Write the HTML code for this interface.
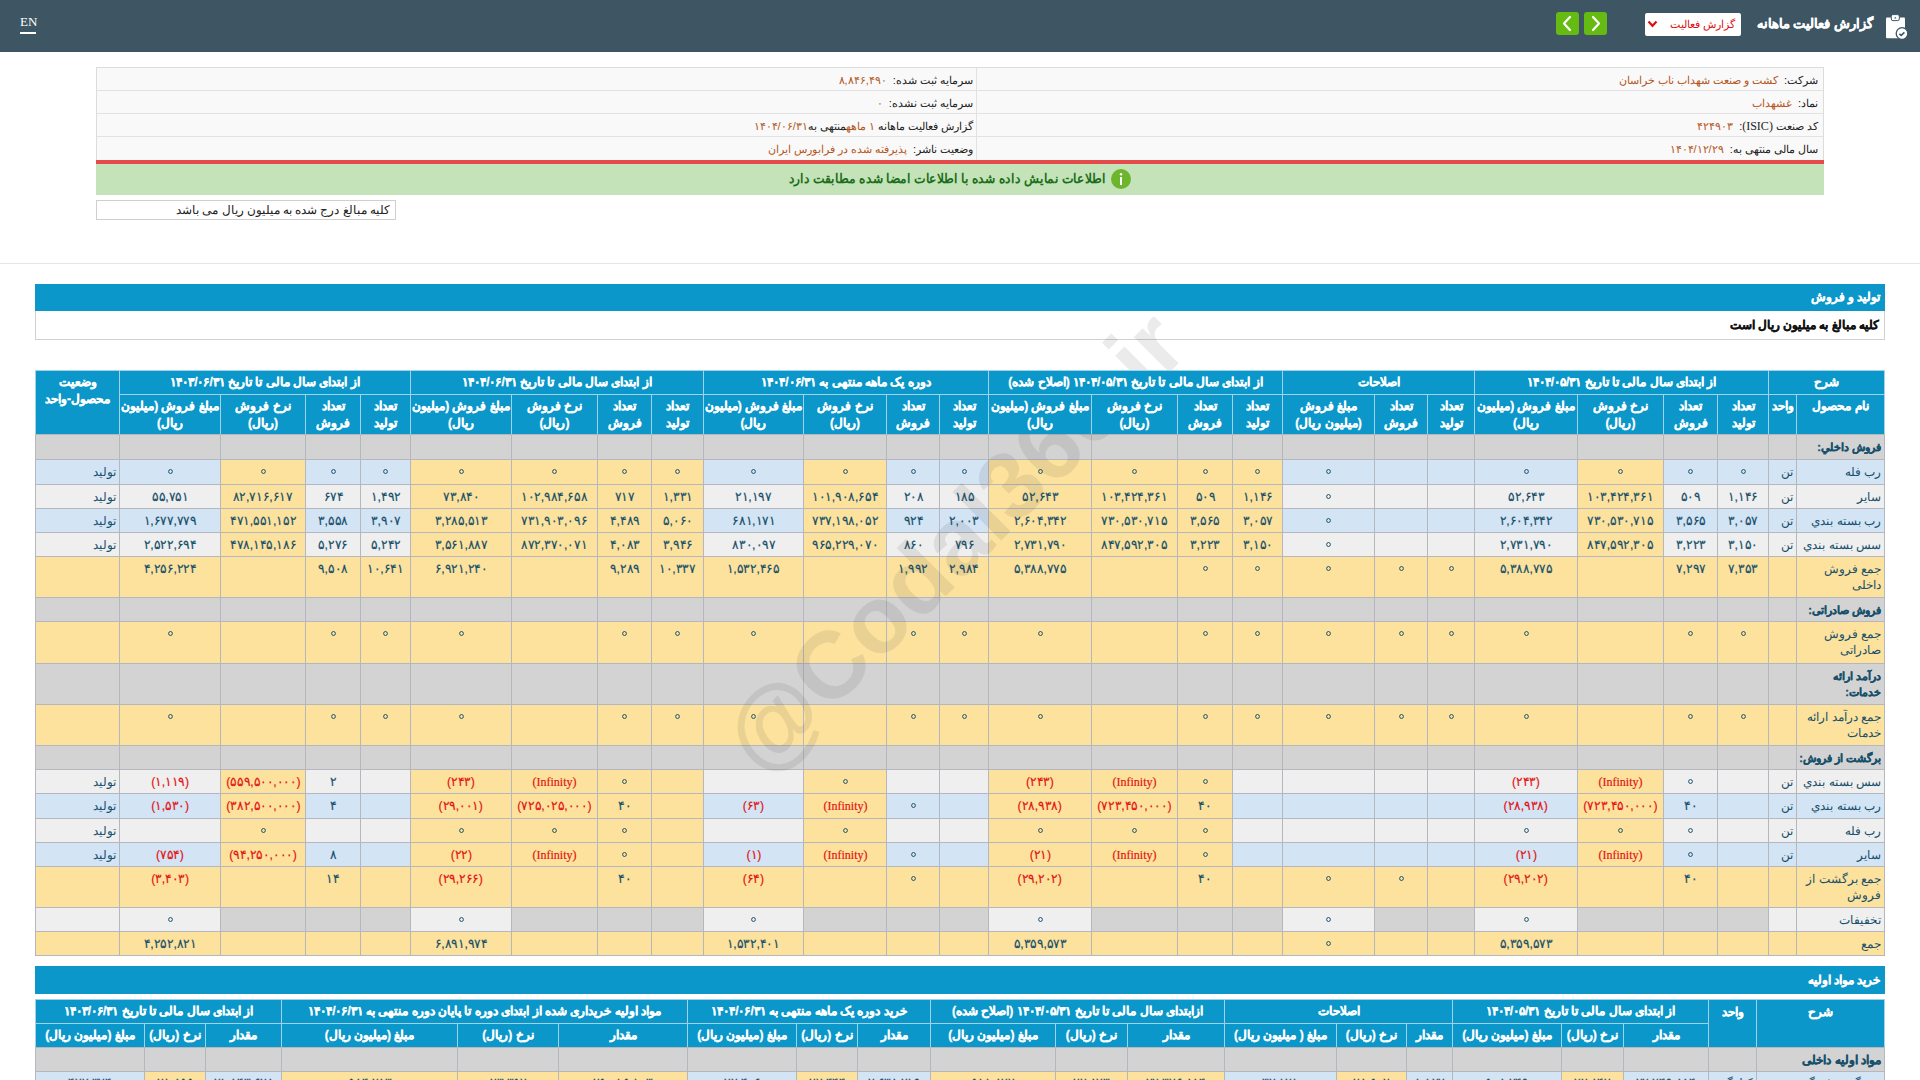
<!DOCTYPE html>
<html lang="fa"><head><meta charset="utf-8"><title>گزارش فعالیت ماهانه</title><style>
*{box-sizing:border-box;margin:0;padding:0}
html,body{width:1920px;height:1080px;overflow:hidden;background:#fff}
body{font-family:"Liberation Sans",sans-serif;font-size:13px;color:#222;position:relative}
.a{position:absolute}
.c{position:absolute;overflow:hidden;white-space:nowrap;direction:rtl;border-left:1px solid #b6b6be;border-top:1px solid #b6b6be;color:#17506b;text-align:center;font-size:13px;line-height:16px;padding-top:4px}
.h{position:absolute;overflow:hidden;white-space:nowrap;direction:rtl;border-left:1px solid #9fd3ea;border-top:1px solid #9fd3ea;background:#0b97c9;color:#fff;text-align:center;font-weight:bold;-webkit-text-stroke:.3px #fff;font-size:12px;line-height:17px;padding-top:3px}
.r{text-align:right;padding-right:3px}
.n{color:#e31414}
.b{font-weight:bold;-webkit-text-stroke:.3px currentColor}
.t1{font-size:11.5px}
.sb{font-weight:bold;font-size:12px;-webkit-text-stroke:.3px currentColor}
.sb11{font-size:11px}
.wrap{white-space:nowrap}
.inf{font-family:"Liberation Serif",serif;font-size:12.8px}
.s{display:inline-block;transform:scaleX(.94);-webkit-text-stroke:.2px currentColor}
.z{display:inline-block;width:5px;height:5px;border:1.7px solid currentColor;border-radius:50%;vertical-align:top;margin-top:5px}
.t1{font-size:12px}
</style></head><body>
<div class="a" style="left:0;top:0;width:1920px;height:52px;background:#3e5664"></div>
<div class="a" style="left:20px;top:14px;font-family:'Liberation Serif',serif;font-size:13px;color:#fff;line-height:16px">EN</div>
<div class="a" style="left:20px;top:32px;width:16px;height:1.5px;background:#fff"></div>
<svg class="a" style="left:1882px;top:12px" width="30" height="30" viewBox="0 0 30 30">
<rect x="4" y="5.6" width="19" height="20.7" rx="1" fill="#fff"/>
<rect x="9.3" y="2.6" width="8" height="6" rx="1.6" fill="#fff" stroke="#3e5664" stroke-width="1"/>
<path d="M12.2 6.6 l1.1 -1.8 l1.1 1.8z" fill="#3e5664"/>
<circle cx="20" cy="21.5" r="5.8" fill="#fff" stroke="#3e5664" stroke-width="1.3"/>
<path d="M17.4 21.9 l1.8 1.5 l3.2 -3" stroke="#3e5664" stroke-width="1.6" fill="none"/>
</svg>
<div class="a b" dir="rtl" style="right:47px;top:14px;font-size:13px;line-height:20px;color:#fff">گزارش فعالیت ماهانه</div>
<div class="a" style="left:1645px;top:13px;width:96px;height:23px;background:#fff;border-radius:2px"></div>
<div class="a" dir="rtl" style="right:185px;top:15px;font-size:11px;line-height:19px;color:#e01010">گزارش فعالیت</div>
<svg class="a" style="left:1647px;top:20px" width="11" height="8" viewBox="0 0 11 8"><path d="M1.5 1.5 L5.5 5.8 L9.5 1.5" stroke="#e01010" stroke-width="2.2" fill="none"/></svg>
<div class="a" style="left:1556px;top:12px;width:23px;height:23px;background:#66bb12;border-radius:3px"></div>
<svg class="a" style="left:1556px;top:12px" width="23" height="23" viewBox="0 0 23 23"><path d="M14 5 L8 11.5 L14 18" stroke="#fff" stroke-width="2.2" fill="none" stroke-linecap="round" stroke-linejoin="round"/></svg>
<div class="a" style="left:1584px;top:12px;width:23px;height:23px;background:#66bb12;border-radius:3px"></div>
<svg class="a" style="left:1584px;top:12px" width="23" height="23" viewBox="0 0 23 23"><path d="M9 5 L15 11.5 L9 18" stroke="#fff" stroke-width="2.2" fill="none" stroke-linecap="round" stroke-linejoin="round"/></svg>
<div class="a" style="left:96px;top:67px;width:1728px;height:95px;background:#f9f9f9;border:1px solid #dcdcdc;border-bottom:none"></div>
<div class="a" style="left:97px;top:90px;width:1726px;height:1px;background:#e2e2e2"></div>
<div class="a" style="left:97px;top:113px;width:1726px;height:1px;background:#e2e2e2"></div>
<div class="a" style="left:97px;top:136px;width:1726px;height:1px;background:#e2e2e2"></div>
<div class="a" style="left:976px;top:68px;width:1px;height:93px;background:#e2e2e2"></div>
<div class="a" dir="rtl" style="right:102px;top:69px;line-height:23px;font-size:11px;white-space:nowrap"><span style="color:#222">شرکت:</span>&nbsp; <span style="color:#b4561c">کشت و صنعت شهداب ناب خراسان</span></div>
<div class="a" dir="rtl" style="right:947px;top:69px;line-height:23px;font-size:11px;white-space:nowrap"><span style="color:#222">سرمایه ثبت شده:</span>&nbsp; <span style="color:#b4561c">۸,۸۴۶,۴۹۰</span></div>
<div class="a" dir="rtl" style="right:102px;top:92px;line-height:23px;font-size:11px;white-space:nowrap"><span style="color:#222">نماد:</span>&nbsp; <span style="color:#b4561c">غشهداب</span></div>
<div class="a" dir="rtl" style="right:947px;top:92px;line-height:23px;font-size:11px;white-space:nowrap"><span style="color:#222">سرمایه ثبت نشده:</span>&nbsp; <span style="color:#b4561c">۰</span></div>
<div class="a" dir="rtl" style="right:102px;top:115px;line-height:23px;font-size:11px;white-space:nowrap"><span style="color:#222">کد صنعت <span style="font-family:'Liberation Serif',serif;font-size:12px">(ISIC)</span>:</span>&nbsp; <span style="color:#b4561c">۴۲۴۹۰۳</span></div>
<div class="a" dir="rtl" style="right:947px;top:115px;line-height:23px;font-size:11px;white-space:nowrap"><span style="color:#222">گزارش فعالیت ماهانه </span><span style="color:#b4561c">۱ ماهه</span><span style="color:#222">منتهی به</span><span style="color:#b4561c">۱۴۰۴/۰۶/۳۱</span></div>
<div class="a" dir="rtl" style="right:102px;top:138px;line-height:23px;font-size:11px;white-space:nowrap"><span style="color:#222">سال مالی منتهی به:</span>&nbsp; <span style="color:#b4561c">۱۴۰۴/۱۲/۲۹</span></div>
<div class="a" dir="rtl" style="right:947px;top:138px;line-height:23px;font-size:11px;white-space:nowrap"><span style="color:#222">وضعیت ناشر:</span>&nbsp; <span style="color:#b4561c">پذیرفته شده در فرابورس ایران</span></div>
<div class="a" style="left:96px;top:160px;width:1728px;height:4px;background:#e44a4a"></div>
<div class="a" style="left:96px;top:164px;width:1728px;height:31px;background:#c4e3b8"></div>
<div class="a" dir="rtl" style="font-weight:bold;right:814px;top:170px;line-height:18px;font-size:13px;color:#1c6e1c;white-space:nowrap;transform:scaleX(.942);transform-origin:100% 50%">اطلاعات نمایش داده شده با اطلاعات امضا شده مطابقت دارد</div>
<svg class="a" style="left:1111px;top:169px" width="20" height="20" viewBox="0 0 20 20"><circle cx="10" cy="10" r="10" fill="#6cb52d"/><rect x="9" y="8" width="2" height="8" fill="#fff"/><circle cx="10" cy="5.3" r="1.2" fill="#fff"/></svg>
<div class="a" style="left:96px;top:200px;width:300px;height:20px;border:1px solid #cfcfcf;background:#fff"></div>
<div class="a" dir="rtl" style="right:1530px;top:201px;line-height:18px;font-size:11.7px;color:#222;white-space:nowrap">کلیه مبالغ درج شده به میلیون ریال می باشد</div>
<div class="a" style="left:0;top:263px;width:1920px;height:1px;background:#e6e6e6"></div>
<div class="a b" dir="rtl" style="left:35px;top:311px;width:1850px;height:29px;background:#fff;border:1px solid #d0d0d0;border-top:none;color:#111;font-size:11.8px;line-height:28px;padding-right:5px">کلیه مبالغ به میلیون ریال است</div>
<div class="c r sb sb11" style="left:1796.00px;top:434.00px;width:88.00px;height:25.00px;background:#d3d3d3;">فروش داخلي:</div>
<div class="c r t1" style="left:1768.00px;top:434.00px;width:28.00px;height:25.00px;background:#d3d3d3;"></div>
<div class="c " style="left:1717.00px;top:434.00px;width:51.00px;height:25.00px;background:#d3d3d3;"></div>
<div class="c " style="left:1663.00px;top:434.00px;width:54.00px;height:25.00px;background:#d3d3d3;"></div>
<div class="c " style="left:1577.00px;top:434.00px;width:86.00px;height:25.00px;background:#d3d3d3;"></div>
<div class="c " style="left:1474.00px;top:434.00px;width:103.00px;height:25.00px;background:#d3d3d3;"></div>
<div class="c " style="left:1427.00px;top:434.00px;width:47.00px;height:25.00px;background:#d3d3d3;"></div>
<div class="c " style="left:1374.00px;top:434.00px;width:53.00px;height:25.00px;background:#d3d3d3;"></div>
<div class="c " style="left:1282.00px;top:434.00px;width:92.00px;height:25.00px;background:#d3d3d3;"></div>
<div class="c " style="left:1232.00px;top:434.00px;width:50.00px;height:25.00px;background:#d3d3d3;"></div>
<div class="c " style="left:1177.00px;top:434.00px;width:55.00px;height:25.00px;background:#d3d3d3;"></div>
<div class="c " style="left:1091.00px;top:434.00px;width:86.00px;height:25.00px;background:#d3d3d3;"></div>
<div class="c " style="left:988.00px;top:434.00px;width:103.00px;height:25.00px;background:#d3d3d3;"></div>
<div class="c " style="left:939.00px;top:434.00px;width:49.00px;height:25.00px;background:#d3d3d3;"></div>
<div class="c " style="left:886.00px;top:434.00px;width:53.00px;height:25.00px;background:#d3d3d3;"></div>
<div class="c " style="left:803.00px;top:434.00px;width:83.00px;height:25.00px;background:#d3d3d3;"></div>
<div class="c " style="left:703.00px;top:434.00px;width:100.00px;height:25.00px;background:#d3d3d3;"></div>
<div class="c " style="left:651.00px;top:434.00px;width:52.00px;height:25.00px;background:#d3d3d3;"></div>
<div class="c " style="left:597.00px;top:434.00px;width:54.00px;height:25.00px;background:#d3d3d3;"></div>
<div class="c " style="left:511.00px;top:434.00px;width:86.00px;height:25.00px;background:#d3d3d3;"></div>
<div class="c " style="left:410.00px;top:434.00px;width:101.00px;height:25.00px;background:#d3d3d3;"></div>
<div class="c " style="left:360.00px;top:434.00px;width:50.00px;height:25.00px;background:#d3d3d3;"></div>
<div class="c " style="left:305.00px;top:434.00px;width:55.00px;height:25.00px;background:#d3d3d3;"></div>
<div class="c " style="left:220.00px;top:434.00px;width:85.00px;height:25.00px;background:#d3d3d3;"></div>
<div class="c " style="left:119.00px;top:434.00px;width:101.00px;height:25.00px;background:#d3d3d3;"></div>
<div class="c r t1" style="left:35.00px;top:434.00px;width:84.00px;height:25.00px;background:#d3d3d3;"></div>
<div class="c r t1" style="left:1796.00px;top:459.00px;width:88.00px;height:25.00px;background:#d3e4f5;">رب فله</div>
<div class="c r t1" style="left:1768.00px;top:459.00px;width:28.00px;height:25.00px;background:#d3e4f5;">تن</div>
<div class="c " style="left:1717.00px;top:459.00px;width:51.00px;height:25.00px;background:#d3e4f5;"><span class="s"><i class="z"></i></span></div>
<div class="c " style="left:1663.00px;top:459.00px;width:54.00px;height:25.00px;background:#d3e4f5;"><span class="s"><i class="z"></i></span></div>
<div class="c " style="left:1577.00px;top:459.00px;width:86.00px;height:25.00px;background:#fde29d;"><span class="s"><i class="z"></i></span></div>
<div class="c " style="left:1474.00px;top:459.00px;width:103.00px;height:25.00px;background:#d3e4f5;"><span class="s"><i class="z"></i></span></div>
<div class="c " style="left:1427.00px;top:459.00px;width:47.00px;height:25.00px;background:#d3e4f5;"></div>
<div class="c " style="left:1374.00px;top:459.00px;width:53.00px;height:25.00px;background:#d3e4f5;"></div>
<div class="c " style="left:1282.00px;top:459.00px;width:92.00px;height:25.00px;background:#d3e4f5;"><span class="s"><i class="z"></i></span></div>
<div class="c " style="left:1232.00px;top:459.00px;width:50.00px;height:25.00px;background:#fde29d;"><span class="s"><i class="z"></i></span></div>
<div class="c " style="left:1177.00px;top:459.00px;width:55.00px;height:25.00px;background:#fde29d;"><span class="s"><i class="z"></i></span></div>
<div class="c " style="left:1091.00px;top:459.00px;width:86.00px;height:25.00px;background:#fde29d;"><span class="s"><i class="z"></i></span></div>
<div class="c " style="left:988.00px;top:459.00px;width:103.00px;height:25.00px;background:#fde29d;"><span class="s"><i class="z"></i></span></div>
<div class="c " style="left:939.00px;top:459.00px;width:49.00px;height:25.00px;background:#d3e4f5;"><span class="s"><i class="z"></i></span></div>
<div class="c " style="left:886.00px;top:459.00px;width:53.00px;height:25.00px;background:#d3e4f5;"><span class="s"><i class="z"></i></span></div>
<div class="c " style="left:803.00px;top:459.00px;width:83.00px;height:25.00px;background:#fde29d;"><span class="s"><i class="z"></i></span></div>
<div class="c " style="left:703.00px;top:459.00px;width:100.00px;height:25.00px;background:#d3e4f5;"><span class="s"><i class="z"></i></span></div>
<div class="c " style="left:651.00px;top:459.00px;width:52.00px;height:25.00px;background:#fde29d;"><span class="s"><i class="z"></i></span></div>
<div class="c " style="left:597.00px;top:459.00px;width:54.00px;height:25.00px;background:#fde29d;"><span class="s"><i class="z"></i></span></div>
<div class="c " style="left:511.00px;top:459.00px;width:86.00px;height:25.00px;background:#fde29d;"><span class="s"><i class="z"></i></span></div>
<div class="c " style="left:410.00px;top:459.00px;width:101.00px;height:25.00px;background:#fde29d;"><span class="s"><i class="z"></i></span></div>
<div class="c " style="left:360.00px;top:459.00px;width:50.00px;height:25.00px;background:#d3e4f5;"><span class="s"><i class="z"></i></span></div>
<div class="c " style="left:305.00px;top:459.00px;width:55.00px;height:25.00px;background:#d3e4f5;"><span class="s"><i class="z"></i></span></div>
<div class="c " style="left:220.00px;top:459.00px;width:85.00px;height:25.00px;background:#fde29d;"><span class="s"><i class="z"></i></span></div>
<div class="c " style="left:119.00px;top:459.00px;width:101.00px;height:25.00px;background:#d3e4f5;"><span class="s"><i class="z"></i></span></div>
<div class="c r t1" style="left:35.00px;top:459.00px;width:84.00px;height:25.00px;background:#d3e4f5;">تولید</div>
<div class="c r t1" style="left:1796.00px;top:484.00px;width:88.00px;height:24.00px;background:#efefef;">سایر</div>
<div class="c r t1" style="left:1768.00px;top:484.00px;width:28.00px;height:24.00px;background:#efefef;">تن</div>
<div class="c " style="left:1717.00px;top:484.00px;width:51.00px;height:24.00px;background:#efefef;"><span class="s">۱,۱۴۶</span></div>
<div class="c " style="left:1663.00px;top:484.00px;width:54.00px;height:24.00px;background:#efefef;"><span class="s">۵۰۹</span></div>
<div class="c " style="left:1577.00px;top:484.00px;width:86.00px;height:24.00px;background:#fde29d;"><span class="s">۱۰۳,۴۲۴,۳۶۱</span></div>
<div class="c " style="left:1474.00px;top:484.00px;width:103.00px;height:24.00px;background:#efefef;"><span class="s">۵۲,۶۴۳</span></div>
<div class="c " style="left:1427.00px;top:484.00px;width:47.00px;height:24.00px;background:#efefef;"></div>
<div class="c " style="left:1374.00px;top:484.00px;width:53.00px;height:24.00px;background:#efefef;"></div>
<div class="c " style="left:1282.00px;top:484.00px;width:92.00px;height:24.00px;background:#efefef;"><span class="s"><i class="z"></i></span></div>
<div class="c " style="left:1232.00px;top:484.00px;width:50.00px;height:24.00px;background:#fde29d;"><span class="s">۱,۱۴۶</span></div>
<div class="c " style="left:1177.00px;top:484.00px;width:55.00px;height:24.00px;background:#fde29d;"><span class="s">۵۰۹</span></div>
<div class="c " style="left:1091.00px;top:484.00px;width:86.00px;height:24.00px;background:#fde29d;"><span class="s">۱۰۳,۴۲۴,۳۶۱</span></div>
<div class="c " style="left:988.00px;top:484.00px;width:103.00px;height:24.00px;background:#fde29d;"><span class="s">۵۲,۶۴۳</span></div>
<div class="c " style="left:939.00px;top:484.00px;width:49.00px;height:24.00px;background:#efefef;"><span class="s">۱۸۵</span></div>
<div class="c " style="left:886.00px;top:484.00px;width:53.00px;height:24.00px;background:#efefef;"><span class="s">۲۰۸</span></div>
<div class="c " style="left:803.00px;top:484.00px;width:83.00px;height:24.00px;background:#fde29d;"><span class="s">۱۰۱,۹۰۸,۶۵۴</span></div>
<div class="c " style="left:703.00px;top:484.00px;width:100.00px;height:24.00px;background:#efefef;"><span class="s">۲۱,۱۹۷</span></div>
<div class="c " style="left:651.00px;top:484.00px;width:52.00px;height:24.00px;background:#fde29d;"><span class="s">۱,۳۳۱</span></div>
<div class="c " style="left:597.00px;top:484.00px;width:54.00px;height:24.00px;background:#fde29d;"><span class="s">۷۱۷</span></div>
<div class="c " style="left:511.00px;top:484.00px;width:86.00px;height:24.00px;background:#fde29d;"><span class="s">۱۰۲,۹۸۴,۶۵۸</span></div>
<div class="c " style="left:410.00px;top:484.00px;width:101.00px;height:24.00px;background:#fde29d;"><span class="s">۷۳,۸۴۰</span></div>
<div class="c " style="left:360.00px;top:484.00px;width:50.00px;height:24.00px;background:#efefef;"><span class="s">۱,۴۹۲</span></div>
<div class="c " style="left:305.00px;top:484.00px;width:55.00px;height:24.00px;background:#efefef;"><span class="s">۶۷۴</span></div>
<div class="c " style="left:220.00px;top:484.00px;width:85.00px;height:24.00px;background:#fde29d;"><span class="s">۸۲,۷۱۶,۶۱۷</span></div>
<div class="c " style="left:119.00px;top:484.00px;width:101.00px;height:24.00px;background:#efefef;"><span class="s">۵۵,۷۵۱</span></div>
<div class="c r t1" style="left:35.00px;top:484.00px;width:84.00px;height:24.00px;background:#efefef;">تولید</div>
<div class="c r t1" style="left:1796.00px;top:508.00px;width:88.00px;height:24.00px;background:#d3e4f5;">رب بسته بندي</div>
<div class="c r t1" style="left:1768.00px;top:508.00px;width:28.00px;height:24.00px;background:#d3e4f5;">تن</div>
<div class="c " style="left:1717.00px;top:508.00px;width:51.00px;height:24.00px;background:#d3e4f5;"><span class="s">۳,۰۵۷</span></div>
<div class="c " style="left:1663.00px;top:508.00px;width:54.00px;height:24.00px;background:#d3e4f5;"><span class="s">۳,۵۶۵</span></div>
<div class="c " style="left:1577.00px;top:508.00px;width:86.00px;height:24.00px;background:#fde29d;"><span class="s">۷۳۰,۵۳۰,۷۱۵</span></div>
<div class="c " style="left:1474.00px;top:508.00px;width:103.00px;height:24.00px;background:#d3e4f5;"><span class="s">۲,۶۰۴,۳۴۲</span></div>
<div class="c " style="left:1427.00px;top:508.00px;width:47.00px;height:24.00px;background:#d3e4f5;"></div>
<div class="c " style="left:1374.00px;top:508.00px;width:53.00px;height:24.00px;background:#d3e4f5;"></div>
<div class="c " style="left:1282.00px;top:508.00px;width:92.00px;height:24.00px;background:#d3e4f5;"><span class="s"><i class="z"></i></span></div>
<div class="c " style="left:1232.00px;top:508.00px;width:50.00px;height:24.00px;background:#fde29d;"><span class="s">۳,۰۵۷</span></div>
<div class="c " style="left:1177.00px;top:508.00px;width:55.00px;height:24.00px;background:#fde29d;"><span class="s">۳,۵۶۵</span></div>
<div class="c " style="left:1091.00px;top:508.00px;width:86.00px;height:24.00px;background:#fde29d;"><span class="s">۷۳۰,۵۳۰,۷۱۵</span></div>
<div class="c " style="left:988.00px;top:508.00px;width:103.00px;height:24.00px;background:#fde29d;"><span class="s">۲,۶۰۴,۳۴۲</span></div>
<div class="c " style="left:939.00px;top:508.00px;width:49.00px;height:24.00px;background:#d3e4f5;"><span class="s">۲,۰۰۳</span></div>
<div class="c " style="left:886.00px;top:508.00px;width:53.00px;height:24.00px;background:#d3e4f5;"><span class="s">۹۲۴</span></div>
<div class="c " style="left:803.00px;top:508.00px;width:83.00px;height:24.00px;background:#fde29d;"><span class="s">۷۳۷,۱۹۸,۰۵۲</span></div>
<div class="c " style="left:703.00px;top:508.00px;width:100.00px;height:24.00px;background:#d3e4f5;"><span class="s">۶۸۱,۱۷۱</span></div>
<div class="c " style="left:651.00px;top:508.00px;width:52.00px;height:24.00px;background:#fde29d;"><span class="s">۵,۰۶۰</span></div>
<div class="c " style="left:597.00px;top:508.00px;width:54.00px;height:24.00px;background:#fde29d;"><span class="s">۴,۴۸۹</span></div>
<div class="c " style="left:511.00px;top:508.00px;width:86.00px;height:24.00px;background:#fde29d;"><span class="s">۷۳۱,۹۰۳,۰۹۶</span></div>
<div class="c " style="left:410.00px;top:508.00px;width:101.00px;height:24.00px;background:#fde29d;"><span class="s">۳,۲۸۵,۵۱۳</span></div>
<div class="c " style="left:360.00px;top:508.00px;width:50.00px;height:24.00px;background:#d3e4f5;"><span class="s">۳,۹۰۷</span></div>
<div class="c " style="left:305.00px;top:508.00px;width:55.00px;height:24.00px;background:#d3e4f5;"><span class="s">۳,۵۵۸</span></div>
<div class="c " style="left:220.00px;top:508.00px;width:85.00px;height:24.00px;background:#fde29d;"><span class="s">۴۷۱,۵۵۱,۱۵۲</span></div>
<div class="c " style="left:119.00px;top:508.00px;width:101.00px;height:24.00px;background:#d3e4f5;"><span class="s">۱,۶۷۷,۷۷۹</span></div>
<div class="c r t1" style="left:35.00px;top:508.00px;width:84.00px;height:24.00px;background:#d3e4f5;">تولید</div>
<div class="c r t1" style="left:1796.00px;top:532.00px;width:88.00px;height:24.00px;background:#efefef;">سس بسته بندي</div>
<div class="c r t1" style="left:1768.00px;top:532.00px;width:28.00px;height:24.00px;background:#efefef;">تن</div>
<div class="c " style="left:1717.00px;top:532.00px;width:51.00px;height:24.00px;background:#efefef;"><span class="s">۳,۱۵۰</span></div>
<div class="c " style="left:1663.00px;top:532.00px;width:54.00px;height:24.00px;background:#efefef;"><span class="s">۳,۲۲۳</span></div>
<div class="c " style="left:1577.00px;top:532.00px;width:86.00px;height:24.00px;background:#fde29d;"><span class="s">۸۴۷,۵۹۲,۳۰۵</span></div>
<div class="c " style="left:1474.00px;top:532.00px;width:103.00px;height:24.00px;background:#efefef;"><span class="s">۲,۷۳۱,۷۹۰</span></div>
<div class="c " style="left:1427.00px;top:532.00px;width:47.00px;height:24.00px;background:#efefef;"></div>
<div class="c " style="left:1374.00px;top:532.00px;width:53.00px;height:24.00px;background:#efefef;"></div>
<div class="c " style="left:1282.00px;top:532.00px;width:92.00px;height:24.00px;background:#efefef;"><span class="s"><i class="z"></i></span></div>
<div class="c " style="left:1232.00px;top:532.00px;width:50.00px;height:24.00px;background:#fde29d;"><span class="s">۳,۱۵۰</span></div>
<div class="c " style="left:1177.00px;top:532.00px;width:55.00px;height:24.00px;background:#fde29d;"><span class="s">۳,۲۲۳</span></div>
<div class="c " style="left:1091.00px;top:532.00px;width:86.00px;height:24.00px;background:#fde29d;"><span class="s">۸۴۷,۵۹۲,۳۰۵</span></div>
<div class="c " style="left:988.00px;top:532.00px;width:103.00px;height:24.00px;background:#fde29d;"><span class="s">۲,۷۳۱,۷۹۰</span></div>
<div class="c " style="left:939.00px;top:532.00px;width:49.00px;height:24.00px;background:#efefef;"><span class="s">۷۹۶</span></div>
<div class="c " style="left:886.00px;top:532.00px;width:53.00px;height:24.00px;background:#efefef;"><span class="s">۸۶۰</span></div>
<div class="c " style="left:803.00px;top:532.00px;width:83.00px;height:24.00px;background:#fde29d;"><span class="s">۹۶۵,۲۲۹,۰۷۰</span></div>
<div class="c " style="left:703.00px;top:532.00px;width:100.00px;height:24.00px;background:#efefef;"><span class="s">۸۳۰,۰۹۷</span></div>
<div class="c " style="left:651.00px;top:532.00px;width:52.00px;height:24.00px;background:#fde29d;"><span class="s">۳,۹۴۶</span></div>
<div class="c " style="left:597.00px;top:532.00px;width:54.00px;height:24.00px;background:#fde29d;"><span class="s">۴,۰۸۳</span></div>
<div class="c " style="left:511.00px;top:532.00px;width:86.00px;height:24.00px;background:#fde29d;"><span class="s">۸۷۲,۳۷۰,۰۷۱</span></div>
<div class="c " style="left:410.00px;top:532.00px;width:101.00px;height:24.00px;background:#fde29d;"><span class="s">۳,۵۶۱,۸۸۷</span></div>
<div class="c " style="left:360.00px;top:532.00px;width:50.00px;height:24.00px;background:#efefef;"><span class="s">۵,۲۴۲</span></div>
<div class="c " style="left:305.00px;top:532.00px;width:55.00px;height:24.00px;background:#efefef;"><span class="s">۵,۲۷۶</span></div>
<div class="c " style="left:220.00px;top:532.00px;width:85.00px;height:24.00px;background:#fde29d;"><span class="s">۴۷۸,۱۴۵,۱۸۶</span></div>
<div class="c " style="left:119.00px;top:532.00px;width:101.00px;height:24.00px;background:#efefef;"><span class="s">۲,۵۲۲,۶۹۴</span></div>
<div class="c r t1" style="left:35.00px;top:532.00px;width:84.00px;height:24.00px;background:#efefef;">تولید</div>
<div class="c r t1" style="left:1796.00px;top:556.00px;width:88.00px;height:41.00px;background:#fde29d;">جمع فروش<br>داخلی</div>
<div class="c r t1" style="left:1768.00px;top:556.00px;width:28.00px;height:41.00px;background:#fde29d;"></div>
<div class="c " style="left:1717.00px;top:556.00px;width:51.00px;height:41.00px;background:#fde29d;"><span class="s">۷,۳۵۳</span></div>
<div class="c " style="left:1663.00px;top:556.00px;width:54.00px;height:41.00px;background:#fde29d;"><span class="s">۷,۲۹۷</span></div>
<div class="c " style="left:1577.00px;top:556.00px;width:86.00px;height:41.00px;background:#fde29d;"></div>
<div class="c " style="left:1474.00px;top:556.00px;width:103.00px;height:41.00px;background:#fde29d;"><span class="s">۵,۳۸۸,۷۷۵</span></div>
<div class="c " style="left:1427.00px;top:556.00px;width:47.00px;height:41.00px;background:#fde29d;"><span class="s"><i class="z"></i></span></div>
<div class="c " style="left:1374.00px;top:556.00px;width:53.00px;height:41.00px;background:#fde29d;"><span class="s"><i class="z"></i></span></div>
<div class="c " style="left:1282.00px;top:556.00px;width:92.00px;height:41.00px;background:#fde29d;"><span class="s"><i class="z"></i></span></div>
<div class="c " style="left:1232.00px;top:556.00px;width:50.00px;height:41.00px;background:#fde29d;"><span class="s"><i class="z"></i></span></div>
<div class="c " style="left:1177.00px;top:556.00px;width:55.00px;height:41.00px;background:#fde29d;"><span class="s"><i class="z"></i></span></div>
<div class="c " style="left:1091.00px;top:556.00px;width:86.00px;height:41.00px;background:#fde29d;"></div>
<div class="c " style="left:988.00px;top:556.00px;width:103.00px;height:41.00px;background:#fde29d;"><span class="s">۵,۳۸۸,۷۷۵</span></div>
<div class="c " style="left:939.00px;top:556.00px;width:49.00px;height:41.00px;background:#fde29d;"><span class="s">۲,۹۸۴</span></div>
<div class="c " style="left:886.00px;top:556.00px;width:53.00px;height:41.00px;background:#fde29d;"><span class="s">۱,۹۹۲</span></div>
<div class="c " style="left:803.00px;top:556.00px;width:83.00px;height:41.00px;background:#fde29d;"></div>
<div class="c " style="left:703.00px;top:556.00px;width:100.00px;height:41.00px;background:#fde29d;"><span class="s">۱,۵۳۲,۴۶۵</span></div>
<div class="c " style="left:651.00px;top:556.00px;width:52.00px;height:41.00px;background:#fde29d;"><span class="s">۱۰,۳۳۷</span></div>
<div class="c " style="left:597.00px;top:556.00px;width:54.00px;height:41.00px;background:#fde29d;"><span class="s">۹,۲۸۹</span></div>
<div class="c " style="left:511.00px;top:556.00px;width:86.00px;height:41.00px;background:#fde29d;"></div>
<div class="c " style="left:410.00px;top:556.00px;width:101.00px;height:41.00px;background:#fde29d;"><span class="s">۶,۹۲۱,۲۴۰</span></div>
<div class="c " style="left:360.00px;top:556.00px;width:50.00px;height:41.00px;background:#fde29d;"><span class="s">۱۰,۶۴۱</span></div>
<div class="c " style="left:305.00px;top:556.00px;width:55.00px;height:41.00px;background:#fde29d;"><span class="s">۹,۵۰۸</span></div>
<div class="c " style="left:220.00px;top:556.00px;width:85.00px;height:41.00px;background:#fde29d;"></div>
<div class="c " style="left:119.00px;top:556.00px;width:101.00px;height:41.00px;background:#fde29d;"><span class="s">۴,۲۵۶,۲۲۴</span></div>
<div class="c r t1" style="left:35.00px;top:556.00px;width:84.00px;height:41.00px;background:#fde29d;"></div>
<div class="c r sb sb11" style="left:1796.00px;top:597.00px;width:88.00px;height:24.00px;background:#d3d3d3;">فروش صادراتی:</div>
<div class="c r t1" style="left:1768.00px;top:597.00px;width:28.00px;height:24.00px;background:#d3d3d3;"></div>
<div class="c " style="left:1717.00px;top:597.00px;width:51.00px;height:24.00px;background:#d3d3d3;"></div>
<div class="c " style="left:1663.00px;top:597.00px;width:54.00px;height:24.00px;background:#d3d3d3;"></div>
<div class="c " style="left:1577.00px;top:597.00px;width:86.00px;height:24.00px;background:#d3d3d3;"></div>
<div class="c " style="left:1474.00px;top:597.00px;width:103.00px;height:24.00px;background:#d3d3d3;"></div>
<div class="c " style="left:1427.00px;top:597.00px;width:47.00px;height:24.00px;background:#d3d3d3;"></div>
<div class="c " style="left:1374.00px;top:597.00px;width:53.00px;height:24.00px;background:#d3d3d3;"></div>
<div class="c " style="left:1282.00px;top:597.00px;width:92.00px;height:24.00px;background:#d3d3d3;"></div>
<div class="c " style="left:1232.00px;top:597.00px;width:50.00px;height:24.00px;background:#d3d3d3;"></div>
<div class="c " style="left:1177.00px;top:597.00px;width:55.00px;height:24.00px;background:#d3d3d3;"></div>
<div class="c " style="left:1091.00px;top:597.00px;width:86.00px;height:24.00px;background:#d3d3d3;"></div>
<div class="c " style="left:988.00px;top:597.00px;width:103.00px;height:24.00px;background:#d3d3d3;"></div>
<div class="c " style="left:939.00px;top:597.00px;width:49.00px;height:24.00px;background:#d3d3d3;"></div>
<div class="c " style="left:886.00px;top:597.00px;width:53.00px;height:24.00px;background:#d3d3d3;"></div>
<div class="c " style="left:803.00px;top:597.00px;width:83.00px;height:24.00px;background:#d3d3d3;"></div>
<div class="c " style="left:703.00px;top:597.00px;width:100.00px;height:24.00px;background:#d3d3d3;"></div>
<div class="c " style="left:651.00px;top:597.00px;width:52.00px;height:24.00px;background:#d3d3d3;"></div>
<div class="c " style="left:597.00px;top:597.00px;width:54.00px;height:24.00px;background:#d3d3d3;"></div>
<div class="c " style="left:511.00px;top:597.00px;width:86.00px;height:24.00px;background:#d3d3d3;"></div>
<div class="c " style="left:410.00px;top:597.00px;width:101.00px;height:24.00px;background:#d3d3d3;"></div>
<div class="c " style="left:360.00px;top:597.00px;width:50.00px;height:24.00px;background:#d3d3d3;"></div>
<div class="c " style="left:305.00px;top:597.00px;width:55.00px;height:24.00px;background:#d3d3d3;"></div>
<div class="c " style="left:220.00px;top:597.00px;width:85.00px;height:24.00px;background:#d3d3d3;"></div>
<div class="c " style="left:119.00px;top:597.00px;width:101.00px;height:24.00px;background:#d3d3d3;"></div>
<div class="c r t1" style="left:35.00px;top:597.00px;width:84.00px;height:24.00px;background:#d3d3d3;"></div>
<div class="c r t1" style="left:1796.00px;top:621.00px;width:88.00px;height:42.00px;background:#fde29d;">جمع فروش<br>صادراتی</div>
<div class="c r t1" style="left:1768.00px;top:621.00px;width:28.00px;height:42.00px;background:#fde29d;"></div>
<div class="c " style="left:1717.00px;top:621.00px;width:51.00px;height:42.00px;background:#fde29d;"><span class="s"><i class="z"></i></span></div>
<div class="c " style="left:1663.00px;top:621.00px;width:54.00px;height:42.00px;background:#fde29d;"><span class="s"><i class="z"></i></span></div>
<div class="c " style="left:1577.00px;top:621.00px;width:86.00px;height:42.00px;background:#fde29d;"></div>
<div class="c " style="left:1474.00px;top:621.00px;width:103.00px;height:42.00px;background:#fde29d;"><span class="s"><i class="z"></i></span></div>
<div class="c " style="left:1427.00px;top:621.00px;width:47.00px;height:42.00px;background:#fde29d;"><span class="s"><i class="z"></i></span></div>
<div class="c " style="left:1374.00px;top:621.00px;width:53.00px;height:42.00px;background:#fde29d;"><span class="s"><i class="z"></i></span></div>
<div class="c " style="left:1282.00px;top:621.00px;width:92.00px;height:42.00px;background:#fde29d;"><span class="s"><i class="z"></i></span></div>
<div class="c " style="left:1232.00px;top:621.00px;width:50.00px;height:42.00px;background:#fde29d;"><span class="s"><i class="z"></i></span></div>
<div class="c " style="left:1177.00px;top:621.00px;width:55.00px;height:42.00px;background:#fde29d;"><span class="s"><i class="z"></i></span></div>
<div class="c " style="left:1091.00px;top:621.00px;width:86.00px;height:42.00px;background:#fde29d;"></div>
<div class="c " style="left:988.00px;top:621.00px;width:103.00px;height:42.00px;background:#fde29d;"><span class="s"><i class="z"></i></span></div>
<div class="c " style="left:939.00px;top:621.00px;width:49.00px;height:42.00px;background:#fde29d;"><span class="s"><i class="z"></i></span></div>
<div class="c " style="left:886.00px;top:621.00px;width:53.00px;height:42.00px;background:#fde29d;"><span class="s"><i class="z"></i></span></div>
<div class="c " style="left:803.00px;top:621.00px;width:83.00px;height:42.00px;background:#fde29d;"></div>
<div class="c " style="left:703.00px;top:621.00px;width:100.00px;height:42.00px;background:#fde29d;"><span class="s"><i class="z"></i></span></div>
<div class="c " style="left:651.00px;top:621.00px;width:52.00px;height:42.00px;background:#fde29d;"><span class="s"><i class="z"></i></span></div>
<div class="c " style="left:597.00px;top:621.00px;width:54.00px;height:42.00px;background:#fde29d;"><span class="s"><i class="z"></i></span></div>
<div class="c " style="left:511.00px;top:621.00px;width:86.00px;height:42.00px;background:#fde29d;"></div>
<div class="c " style="left:410.00px;top:621.00px;width:101.00px;height:42.00px;background:#fde29d;"><span class="s"><i class="z"></i></span></div>
<div class="c " style="left:360.00px;top:621.00px;width:50.00px;height:42.00px;background:#fde29d;"><span class="s"><i class="z"></i></span></div>
<div class="c " style="left:305.00px;top:621.00px;width:55.00px;height:42.00px;background:#fde29d;"><span class="s"><i class="z"></i></span></div>
<div class="c " style="left:220.00px;top:621.00px;width:85.00px;height:42.00px;background:#fde29d;"></div>
<div class="c " style="left:119.00px;top:621.00px;width:101.00px;height:42.00px;background:#fde29d;"><span class="s"><i class="z"></i></span></div>
<div class="c r t1" style="left:35.00px;top:621.00px;width:84.00px;height:42.00px;background:#fde29d;"></div>
<div class="c r sb sb11" style="left:1796.00px;top:663.00px;width:88.00px;height:41.00px;background:#d3d3d3;">درآمد ارائه<br>خدمات:</div>
<div class="c r t1" style="left:1768.00px;top:663.00px;width:28.00px;height:41.00px;background:#d3d3d3;"></div>
<div class="c " style="left:1717.00px;top:663.00px;width:51.00px;height:41.00px;background:#d3d3d3;"></div>
<div class="c " style="left:1663.00px;top:663.00px;width:54.00px;height:41.00px;background:#d3d3d3;"></div>
<div class="c " style="left:1577.00px;top:663.00px;width:86.00px;height:41.00px;background:#d3d3d3;"></div>
<div class="c " style="left:1474.00px;top:663.00px;width:103.00px;height:41.00px;background:#d3d3d3;"></div>
<div class="c " style="left:1427.00px;top:663.00px;width:47.00px;height:41.00px;background:#d3d3d3;"></div>
<div class="c " style="left:1374.00px;top:663.00px;width:53.00px;height:41.00px;background:#d3d3d3;"></div>
<div class="c " style="left:1282.00px;top:663.00px;width:92.00px;height:41.00px;background:#d3d3d3;"></div>
<div class="c " style="left:1232.00px;top:663.00px;width:50.00px;height:41.00px;background:#d3d3d3;"></div>
<div class="c " style="left:1177.00px;top:663.00px;width:55.00px;height:41.00px;background:#d3d3d3;"></div>
<div class="c " style="left:1091.00px;top:663.00px;width:86.00px;height:41.00px;background:#d3d3d3;"></div>
<div class="c " style="left:988.00px;top:663.00px;width:103.00px;height:41.00px;background:#d3d3d3;"></div>
<div class="c " style="left:939.00px;top:663.00px;width:49.00px;height:41.00px;background:#d3d3d3;"></div>
<div class="c " style="left:886.00px;top:663.00px;width:53.00px;height:41.00px;background:#d3d3d3;"></div>
<div class="c " style="left:803.00px;top:663.00px;width:83.00px;height:41.00px;background:#d3d3d3;"></div>
<div class="c " style="left:703.00px;top:663.00px;width:100.00px;height:41.00px;background:#d3d3d3;"></div>
<div class="c " style="left:651.00px;top:663.00px;width:52.00px;height:41.00px;background:#d3d3d3;"></div>
<div class="c " style="left:597.00px;top:663.00px;width:54.00px;height:41.00px;background:#d3d3d3;"></div>
<div class="c " style="left:511.00px;top:663.00px;width:86.00px;height:41.00px;background:#d3d3d3;"></div>
<div class="c " style="left:410.00px;top:663.00px;width:101.00px;height:41.00px;background:#d3d3d3;"></div>
<div class="c " style="left:360.00px;top:663.00px;width:50.00px;height:41.00px;background:#d3d3d3;"></div>
<div class="c " style="left:305.00px;top:663.00px;width:55.00px;height:41.00px;background:#d3d3d3;"></div>
<div class="c " style="left:220.00px;top:663.00px;width:85.00px;height:41.00px;background:#d3d3d3;"></div>
<div class="c " style="left:119.00px;top:663.00px;width:101.00px;height:41.00px;background:#d3d3d3;"></div>
<div class="c r t1" style="left:35.00px;top:663.00px;width:84.00px;height:41.00px;background:#d3d3d3;"></div>
<div class="c r t1" style="left:1796.00px;top:704.00px;width:88.00px;height:41.00px;background:#fde29d;">جمع درآمد ارائه<br>خدمات</div>
<div class="c r t1" style="left:1768.00px;top:704.00px;width:28.00px;height:41.00px;background:#fde29d;"></div>
<div class="c " style="left:1717.00px;top:704.00px;width:51.00px;height:41.00px;background:#fde29d;"><span class="s"><i class="z"></i></span></div>
<div class="c " style="left:1663.00px;top:704.00px;width:54.00px;height:41.00px;background:#fde29d;"><span class="s"><i class="z"></i></span></div>
<div class="c " style="left:1577.00px;top:704.00px;width:86.00px;height:41.00px;background:#fde29d;"></div>
<div class="c " style="left:1474.00px;top:704.00px;width:103.00px;height:41.00px;background:#fde29d;"><span class="s"><i class="z"></i></span></div>
<div class="c " style="left:1427.00px;top:704.00px;width:47.00px;height:41.00px;background:#fde29d;"><span class="s"><i class="z"></i></span></div>
<div class="c " style="left:1374.00px;top:704.00px;width:53.00px;height:41.00px;background:#fde29d;"><span class="s"><i class="z"></i></span></div>
<div class="c " style="left:1282.00px;top:704.00px;width:92.00px;height:41.00px;background:#fde29d;"><span class="s"><i class="z"></i></span></div>
<div class="c " style="left:1232.00px;top:704.00px;width:50.00px;height:41.00px;background:#fde29d;"><span class="s"><i class="z"></i></span></div>
<div class="c " style="left:1177.00px;top:704.00px;width:55.00px;height:41.00px;background:#fde29d;"><span class="s"><i class="z"></i></span></div>
<div class="c " style="left:1091.00px;top:704.00px;width:86.00px;height:41.00px;background:#fde29d;"></div>
<div class="c " style="left:988.00px;top:704.00px;width:103.00px;height:41.00px;background:#fde29d;"><span class="s"><i class="z"></i></span></div>
<div class="c " style="left:939.00px;top:704.00px;width:49.00px;height:41.00px;background:#fde29d;"><span class="s"><i class="z"></i></span></div>
<div class="c " style="left:886.00px;top:704.00px;width:53.00px;height:41.00px;background:#fde29d;"><span class="s"><i class="z"></i></span></div>
<div class="c " style="left:803.00px;top:704.00px;width:83.00px;height:41.00px;background:#fde29d;"></div>
<div class="c " style="left:703.00px;top:704.00px;width:100.00px;height:41.00px;background:#fde29d;"><span class="s"><i class="z"></i></span></div>
<div class="c " style="left:651.00px;top:704.00px;width:52.00px;height:41.00px;background:#fde29d;"><span class="s"><i class="z"></i></span></div>
<div class="c " style="left:597.00px;top:704.00px;width:54.00px;height:41.00px;background:#fde29d;"><span class="s"><i class="z"></i></span></div>
<div class="c " style="left:511.00px;top:704.00px;width:86.00px;height:41.00px;background:#fde29d;"></div>
<div class="c " style="left:410.00px;top:704.00px;width:101.00px;height:41.00px;background:#fde29d;"><span class="s"><i class="z"></i></span></div>
<div class="c " style="left:360.00px;top:704.00px;width:50.00px;height:41.00px;background:#fde29d;"><span class="s"><i class="z"></i></span></div>
<div class="c " style="left:305.00px;top:704.00px;width:55.00px;height:41.00px;background:#fde29d;"><span class="s"><i class="z"></i></span></div>
<div class="c " style="left:220.00px;top:704.00px;width:85.00px;height:41.00px;background:#fde29d;"></div>
<div class="c " style="left:119.00px;top:704.00px;width:101.00px;height:41.00px;background:#fde29d;"><span class="s"><i class="z"></i></span></div>
<div class="c r t1" style="left:35.00px;top:704.00px;width:84.00px;height:41.00px;background:#fde29d;"></div>
<div class="c r sb sb11" style="left:1796.00px;top:745.00px;width:88.00px;height:24.00px;background:#d3d3d3;">برگشت از فروش:</div>
<div class="c r t1" style="left:1768.00px;top:745.00px;width:28.00px;height:24.00px;background:#d3d3d3;"></div>
<div class="c " style="left:1717.00px;top:745.00px;width:51.00px;height:24.00px;background:#d3d3d3;"></div>
<div class="c " style="left:1663.00px;top:745.00px;width:54.00px;height:24.00px;background:#d3d3d3;"></div>
<div class="c " style="left:1577.00px;top:745.00px;width:86.00px;height:24.00px;background:#d3d3d3;"></div>
<div class="c " style="left:1474.00px;top:745.00px;width:103.00px;height:24.00px;background:#d3d3d3;"></div>
<div class="c " style="left:1427.00px;top:745.00px;width:47.00px;height:24.00px;background:#d3d3d3;"></div>
<div class="c " style="left:1374.00px;top:745.00px;width:53.00px;height:24.00px;background:#d3d3d3;"></div>
<div class="c " style="left:1282.00px;top:745.00px;width:92.00px;height:24.00px;background:#d3d3d3;"></div>
<div class="c " style="left:1232.00px;top:745.00px;width:50.00px;height:24.00px;background:#d3d3d3;"></div>
<div class="c " style="left:1177.00px;top:745.00px;width:55.00px;height:24.00px;background:#d3d3d3;"></div>
<div class="c " style="left:1091.00px;top:745.00px;width:86.00px;height:24.00px;background:#d3d3d3;"></div>
<div class="c " style="left:988.00px;top:745.00px;width:103.00px;height:24.00px;background:#d3d3d3;"></div>
<div class="c " style="left:939.00px;top:745.00px;width:49.00px;height:24.00px;background:#d3d3d3;"></div>
<div class="c " style="left:886.00px;top:745.00px;width:53.00px;height:24.00px;background:#d3d3d3;"></div>
<div class="c " style="left:803.00px;top:745.00px;width:83.00px;height:24.00px;background:#d3d3d3;"></div>
<div class="c " style="left:703.00px;top:745.00px;width:100.00px;height:24.00px;background:#d3d3d3;"></div>
<div class="c " style="left:651.00px;top:745.00px;width:52.00px;height:24.00px;background:#d3d3d3;"></div>
<div class="c " style="left:597.00px;top:745.00px;width:54.00px;height:24.00px;background:#d3d3d3;"></div>
<div class="c " style="left:511.00px;top:745.00px;width:86.00px;height:24.00px;background:#d3d3d3;"></div>
<div class="c " style="left:410.00px;top:745.00px;width:101.00px;height:24.00px;background:#d3d3d3;"></div>
<div class="c " style="left:360.00px;top:745.00px;width:50.00px;height:24.00px;background:#d3d3d3;"></div>
<div class="c " style="left:305.00px;top:745.00px;width:55.00px;height:24.00px;background:#d3d3d3;"></div>
<div class="c " style="left:220.00px;top:745.00px;width:85.00px;height:24.00px;background:#d3d3d3;"></div>
<div class="c " style="left:119.00px;top:745.00px;width:101.00px;height:24.00px;background:#d3d3d3;"></div>
<div class="c r t1" style="left:35.00px;top:745.00px;width:84.00px;height:24.00px;background:#d3d3d3;"></div>
<div class="c r t1" style="left:1796.00px;top:769.00px;width:88.00px;height:24.00px;background:#efefef;">سس بسته بندي</div>
<div class="c r t1" style="left:1768.00px;top:769.00px;width:28.00px;height:24.00px;background:#efefef;">تن</div>
<div class="c " style="left:1717.00px;top:769.00px;width:51.00px;height:24.00px;background:#efefef;"></div>
<div class="c " style="left:1663.00px;top:769.00px;width:54.00px;height:24.00px;background:#efefef;"><span class="s"><i class="z"></i></span></div>
<div class="c " style="left:1577.00px;top:769.00px;width:86.00px;height:24.00px;background:#fde29d;"><span class="s"><span class="n inf">(Infinity)</span></span></div>
<div class="c " style="left:1474.00px;top:769.00px;width:103.00px;height:24.00px;background:#efefef;"><span class="s"><span class="n">(۲۴۳)</span></span></div>
<div class="c " style="left:1427.00px;top:769.00px;width:47.00px;height:24.00px;background:#efefef;"></div>
<div class="c " style="left:1374.00px;top:769.00px;width:53.00px;height:24.00px;background:#efefef;"></div>
<div class="c " style="left:1282.00px;top:769.00px;width:92.00px;height:24.00px;background:#efefef;"></div>
<div class="c " style="left:1232.00px;top:769.00px;width:50.00px;height:24.00px;background:#efefef;"></div>
<div class="c " style="left:1177.00px;top:769.00px;width:55.00px;height:24.00px;background:#fde29d;"><span class="s"><i class="z"></i></span></div>
<div class="c " style="left:1091.00px;top:769.00px;width:86.00px;height:24.00px;background:#fde29d;"><span class="s"><span class="n inf">(Infinity)</span></span></div>
<div class="c " style="left:988.00px;top:769.00px;width:103.00px;height:24.00px;background:#fde29d;"><span class="s"><span class="n">(۲۴۳)</span></span></div>
<div class="c " style="left:939.00px;top:769.00px;width:49.00px;height:24.00px;background:#efefef;"></div>
<div class="c " style="left:886.00px;top:769.00px;width:53.00px;height:24.00px;background:#efefef;"></div>
<div class="c " style="left:803.00px;top:769.00px;width:83.00px;height:24.00px;background:#fde29d;"><span class="s"><i class="z"></i></span></div>
<div class="c " style="left:703.00px;top:769.00px;width:100.00px;height:24.00px;background:#efefef;"></div>
<div class="c " style="left:651.00px;top:769.00px;width:52.00px;height:24.00px;background:#fde29d;"></div>
<div class="c " style="left:597.00px;top:769.00px;width:54.00px;height:24.00px;background:#fde29d;"><span class="s"><i class="z"></i></span></div>
<div class="c " style="left:511.00px;top:769.00px;width:86.00px;height:24.00px;background:#fde29d;"><span class="s"><span class="n inf">(Infinity)</span></span></div>
<div class="c " style="left:410.00px;top:769.00px;width:101.00px;height:24.00px;background:#fde29d;"><span class="s"><span class="n">(۲۴۳)</span></span></div>
<div class="c " style="left:360.00px;top:769.00px;width:50.00px;height:24.00px;background:#efefef;"></div>
<div class="c " style="left:305.00px;top:769.00px;width:55.00px;height:24.00px;background:#efefef;"><span class="s">۲</span></div>
<div class="c " style="left:220.00px;top:769.00px;width:85.00px;height:24.00px;background:#fde29d;"><span class="s"><span class="n">(۵۵۹,۵۰۰,۰۰۰)</span></span></div>
<div class="c " style="left:119.00px;top:769.00px;width:101.00px;height:24.00px;background:#efefef;"><span class="s"><span class="n">(۱,۱۱۹)</span></span></div>
<div class="c r t1" style="left:35.00px;top:769.00px;width:84.00px;height:24.00px;background:#efefef;">تولید</div>
<div class="c r t1" style="left:1796.00px;top:793.00px;width:88.00px;height:25.00px;background:#d3e4f5;">رب بسته بندي</div>
<div class="c r t1" style="left:1768.00px;top:793.00px;width:28.00px;height:25.00px;background:#d3e4f5;">تن</div>
<div class="c " style="left:1717.00px;top:793.00px;width:51.00px;height:25.00px;background:#d3e4f5;"></div>
<div class="c " style="left:1663.00px;top:793.00px;width:54.00px;height:25.00px;background:#d3e4f5;"><span class="s">۴۰</span></div>
<div class="c " style="left:1577.00px;top:793.00px;width:86.00px;height:25.00px;background:#fde29d;"><span class="s"><span class="n">(۷۲۳,۴۵۰,۰۰۰)</span></span></div>
<div class="c " style="left:1474.00px;top:793.00px;width:103.00px;height:25.00px;background:#d3e4f5;"><span class="s"><span class="n">(۲۸,۹۳۸)</span></span></div>
<div class="c " style="left:1427.00px;top:793.00px;width:47.00px;height:25.00px;background:#d3e4f5;"></div>
<div class="c " style="left:1374.00px;top:793.00px;width:53.00px;height:25.00px;background:#d3e4f5;"></div>
<div class="c " style="left:1282.00px;top:793.00px;width:92.00px;height:25.00px;background:#d3e4f5;"></div>
<div class="c " style="left:1232.00px;top:793.00px;width:50.00px;height:25.00px;background:#d3e4f5;"></div>
<div class="c " style="left:1177.00px;top:793.00px;width:55.00px;height:25.00px;background:#fde29d;"><span class="s">۴۰</span></div>
<div class="c " style="left:1091.00px;top:793.00px;width:86.00px;height:25.00px;background:#fde29d;"><span class="s"><span class="n">(۷۲۳,۴۵۰,۰۰۰)</span></span></div>
<div class="c " style="left:988.00px;top:793.00px;width:103.00px;height:25.00px;background:#fde29d;"><span class="s"><span class="n">(۲۸,۹۳۸)</span></span></div>
<div class="c " style="left:939.00px;top:793.00px;width:49.00px;height:25.00px;background:#d3e4f5;"></div>
<div class="c " style="left:886.00px;top:793.00px;width:53.00px;height:25.00px;background:#d3e4f5;"><span class="s"><i class="z"></i></span></div>
<div class="c " style="left:803.00px;top:793.00px;width:83.00px;height:25.00px;background:#fde29d;"><span class="s"><span class="n inf">(Infinity)</span></span></div>
<div class="c " style="left:703.00px;top:793.00px;width:100.00px;height:25.00px;background:#d3e4f5;"><span class="s"><span class="n">(۶۳)</span></span></div>
<div class="c " style="left:651.00px;top:793.00px;width:52.00px;height:25.00px;background:#fde29d;"></div>
<div class="c " style="left:597.00px;top:793.00px;width:54.00px;height:25.00px;background:#fde29d;"><span class="s">۴۰</span></div>
<div class="c " style="left:511.00px;top:793.00px;width:86.00px;height:25.00px;background:#fde29d;"><span class="s"><span class="n">(۷۲۵,۰۲۵,۰۰۰)</span></span></div>
<div class="c " style="left:410.00px;top:793.00px;width:101.00px;height:25.00px;background:#fde29d;"><span class="s"><span class="n">(۲۹,۰۰۱)</span></span></div>
<div class="c " style="left:360.00px;top:793.00px;width:50.00px;height:25.00px;background:#d3e4f5;"></div>
<div class="c " style="left:305.00px;top:793.00px;width:55.00px;height:25.00px;background:#d3e4f5;"><span class="s">۴</span></div>
<div class="c " style="left:220.00px;top:793.00px;width:85.00px;height:25.00px;background:#fde29d;"><span class="s"><span class="n">(۳۸۲,۵۰۰,۰۰۰)</span></span></div>
<div class="c " style="left:119.00px;top:793.00px;width:101.00px;height:25.00px;background:#d3e4f5;"><span class="s"><span class="n">(۱,۵۳۰)</span></span></div>
<div class="c r t1" style="left:35.00px;top:793.00px;width:84.00px;height:25.00px;background:#d3e4f5;">تولید</div>
<div class="c r t1" style="left:1796.00px;top:818.00px;width:88.00px;height:24.00px;background:#efefef;">رب فله</div>
<div class="c r t1" style="left:1768.00px;top:818.00px;width:28.00px;height:24.00px;background:#efefef;">تن</div>
<div class="c " style="left:1717.00px;top:818.00px;width:51.00px;height:24.00px;background:#efefef;"></div>
<div class="c " style="left:1663.00px;top:818.00px;width:54.00px;height:24.00px;background:#efefef;"><span class="s"><i class="z"></i></span></div>
<div class="c " style="left:1577.00px;top:818.00px;width:86.00px;height:24.00px;background:#fde29d;"><span class="s"><i class="z"></i></span></div>
<div class="c " style="left:1474.00px;top:818.00px;width:103.00px;height:24.00px;background:#efefef;"><span class="s"><i class="z"></i></span></div>
<div class="c " style="left:1427.00px;top:818.00px;width:47.00px;height:24.00px;background:#efefef;"></div>
<div class="c " style="left:1374.00px;top:818.00px;width:53.00px;height:24.00px;background:#efefef;"></div>
<div class="c " style="left:1282.00px;top:818.00px;width:92.00px;height:24.00px;background:#efefef;"></div>
<div class="c " style="left:1232.00px;top:818.00px;width:50.00px;height:24.00px;background:#efefef;"></div>
<div class="c " style="left:1177.00px;top:818.00px;width:55.00px;height:24.00px;background:#fde29d;"><span class="s"><i class="z"></i></span></div>
<div class="c " style="left:1091.00px;top:818.00px;width:86.00px;height:24.00px;background:#fde29d;"><span class="s"><i class="z"></i></span></div>
<div class="c " style="left:988.00px;top:818.00px;width:103.00px;height:24.00px;background:#fde29d;"><span class="s"><i class="z"></i></span></div>
<div class="c " style="left:939.00px;top:818.00px;width:49.00px;height:24.00px;background:#efefef;"></div>
<div class="c " style="left:886.00px;top:818.00px;width:53.00px;height:24.00px;background:#efefef;"></div>
<div class="c " style="left:803.00px;top:818.00px;width:83.00px;height:24.00px;background:#fde29d;"><span class="s"><i class="z"></i></span></div>
<div class="c " style="left:703.00px;top:818.00px;width:100.00px;height:24.00px;background:#efefef;"></div>
<div class="c " style="left:651.00px;top:818.00px;width:52.00px;height:24.00px;background:#fde29d;"></div>
<div class="c " style="left:597.00px;top:818.00px;width:54.00px;height:24.00px;background:#fde29d;"><span class="s"><i class="z"></i></span></div>
<div class="c " style="left:511.00px;top:818.00px;width:86.00px;height:24.00px;background:#fde29d;"><span class="s"><i class="z"></i></span></div>
<div class="c " style="left:410.00px;top:818.00px;width:101.00px;height:24.00px;background:#fde29d;"><span class="s"><i class="z"></i></span></div>
<div class="c " style="left:360.00px;top:818.00px;width:50.00px;height:24.00px;background:#efefef;"></div>
<div class="c " style="left:305.00px;top:818.00px;width:55.00px;height:24.00px;background:#efefef;"></div>
<div class="c " style="left:220.00px;top:818.00px;width:85.00px;height:24.00px;background:#fde29d;"><span class="s"><i class="z"></i></span></div>
<div class="c " style="left:119.00px;top:818.00px;width:101.00px;height:24.00px;background:#efefef;"></div>
<div class="c r t1" style="left:35.00px;top:818.00px;width:84.00px;height:24.00px;background:#efefef;">تولید</div>
<div class="c r t1" style="left:1796.00px;top:842.00px;width:88.00px;height:24.00px;background:#d3e4f5;">سایر</div>
<div class="c r t1" style="left:1768.00px;top:842.00px;width:28.00px;height:24.00px;background:#d3e4f5;">تن</div>
<div class="c " style="left:1717.00px;top:842.00px;width:51.00px;height:24.00px;background:#d3e4f5;"></div>
<div class="c " style="left:1663.00px;top:842.00px;width:54.00px;height:24.00px;background:#d3e4f5;"><span class="s"><i class="z"></i></span></div>
<div class="c " style="left:1577.00px;top:842.00px;width:86.00px;height:24.00px;background:#fde29d;"><span class="s"><span class="n inf">(Infinity)</span></span></div>
<div class="c " style="left:1474.00px;top:842.00px;width:103.00px;height:24.00px;background:#d3e4f5;"><span class="s"><span class="n">(۲۱)</span></span></div>
<div class="c " style="left:1427.00px;top:842.00px;width:47.00px;height:24.00px;background:#d3e4f5;"></div>
<div class="c " style="left:1374.00px;top:842.00px;width:53.00px;height:24.00px;background:#d3e4f5;"></div>
<div class="c " style="left:1282.00px;top:842.00px;width:92.00px;height:24.00px;background:#d3e4f5;"></div>
<div class="c " style="left:1232.00px;top:842.00px;width:50.00px;height:24.00px;background:#d3e4f5;"></div>
<div class="c " style="left:1177.00px;top:842.00px;width:55.00px;height:24.00px;background:#fde29d;"><span class="s"><i class="z"></i></span></div>
<div class="c " style="left:1091.00px;top:842.00px;width:86.00px;height:24.00px;background:#fde29d;"><span class="s"><span class="n inf">(Infinity)</span></span></div>
<div class="c " style="left:988.00px;top:842.00px;width:103.00px;height:24.00px;background:#fde29d;"><span class="s"><span class="n">(۲۱)</span></span></div>
<div class="c " style="left:939.00px;top:842.00px;width:49.00px;height:24.00px;background:#d3e4f5;"></div>
<div class="c " style="left:886.00px;top:842.00px;width:53.00px;height:24.00px;background:#d3e4f5;"><span class="s"><i class="z"></i></span></div>
<div class="c " style="left:803.00px;top:842.00px;width:83.00px;height:24.00px;background:#fde29d;"><span class="s"><span class="n inf">(Infinity)</span></span></div>
<div class="c " style="left:703.00px;top:842.00px;width:100.00px;height:24.00px;background:#d3e4f5;"><span class="s"><span class="n">(۱)</span></span></div>
<div class="c " style="left:651.00px;top:842.00px;width:52.00px;height:24.00px;background:#fde29d;"></div>
<div class="c " style="left:597.00px;top:842.00px;width:54.00px;height:24.00px;background:#fde29d;"><span class="s"><i class="z"></i></span></div>
<div class="c " style="left:511.00px;top:842.00px;width:86.00px;height:24.00px;background:#fde29d;"><span class="s"><span class="n inf">(Infinity)</span></span></div>
<div class="c " style="left:410.00px;top:842.00px;width:101.00px;height:24.00px;background:#fde29d;"><span class="s"><span class="n">(۲۲)</span></span></div>
<div class="c " style="left:360.00px;top:842.00px;width:50.00px;height:24.00px;background:#d3e4f5;"></div>
<div class="c " style="left:305.00px;top:842.00px;width:55.00px;height:24.00px;background:#d3e4f5;"><span class="s">۸</span></div>
<div class="c " style="left:220.00px;top:842.00px;width:85.00px;height:24.00px;background:#fde29d;"><span class="s"><span class="n">(۹۴,۲۵۰,۰۰۰)</span></span></div>
<div class="c " style="left:119.00px;top:842.00px;width:101.00px;height:24.00px;background:#d3e4f5;"><span class="s"><span class="n">(۷۵۴)</span></span></div>
<div class="c r t1" style="left:35.00px;top:842.00px;width:84.00px;height:24.00px;background:#d3e4f5;">تولید</div>
<div class="c r t1" style="left:1796.00px;top:866.00px;width:88.00px;height:41.00px;background:#fde29d;">جمع برگشت از<br>فروش</div>
<div class="c r t1" style="left:1768.00px;top:866.00px;width:28.00px;height:41.00px;background:#fde29d;"></div>
<div class="c " style="left:1717.00px;top:866.00px;width:51.00px;height:41.00px;background:#fde29d;"></div>
<div class="c " style="left:1663.00px;top:866.00px;width:54.00px;height:41.00px;background:#fde29d;"><span class="s">۴۰</span></div>
<div class="c " style="left:1577.00px;top:866.00px;width:86.00px;height:41.00px;background:#fde29d;"></div>
<div class="c " style="left:1474.00px;top:866.00px;width:103.00px;height:41.00px;background:#fde29d;"><span class="s"><span class="n">(۲۹,۲۰۲)</span></span></div>
<div class="c " style="left:1427.00px;top:866.00px;width:47.00px;height:41.00px;background:#fde29d;"></div>
<div class="c " style="left:1374.00px;top:866.00px;width:53.00px;height:41.00px;background:#fde29d;"><span class="s"><i class="z"></i></span></div>
<div class="c " style="left:1282.00px;top:866.00px;width:92.00px;height:41.00px;background:#fde29d;"><span class="s"><i class="z"></i></span></div>
<div class="c " style="left:1232.00px;top:866.00px;width:50.00px;height:41.00px;background:#fde29d;"></div>
<div class="c " style="left:1177.00px;top:866.00px;width:55.00px;height:41.00px;background:#fde29d;"><span class="s">۴۰</span></div>
<div class="c " style="left:1091.00px;top:866.00px;width:86.00px;height:41.00px;background:#fde29d;"></div>
<div class="c " style="left:988.00px;top:866.00px;width:103.00px;height:41.00px;background:#fde29d;"><span class="s"><span class="n">(۲۹,۲۰۲)</span></span></div>
<div class="c " style="left:939.00px;top:866.00px;width:49.00px;height:41.00px;background:#fde29d;"></div>
<div class="c " style="left:886.00px;top:866.00px;width:53.00px;height:41.00px;background:#fde29d;"><span class="s"><i class="z"></i></span></div>
<div class="c " style="left:803.00px;top:866.00px;width:83.00px;height:41.00px;background:#fde29d;"></div>
<div class="c " style="left:703.00px;top:866.00px;width:100.00px;height:41.00px;background:#fde29d;"><span class="s"><span class="n">(۶۴)</span></span></div>
<div class="c " style="left:651.00px;top:866.00px;width:52.00px;height:41.00px;background:#fde29d;"></div>
<div class="c " style="left:597.00px;top:866.00px;width:54.00px;height:41.00px;background:#fde29d;"><span class="s">۴۰</span></div>
<div class="c " style="left:511.00px;top:866.00px;width:86.00px;height:41.00px;background:#fde29d;"></div>
<div class="c " style="left:410.00px;top:866.00px;width:101.00px;height:41.00px;background:#fde29d;"><span class="s"><span class="n">(۲۹,۲۶۶)</span></span></div>
<div class="c " style="left:360.00px;top:866.00px;width:50.00px;height:41.00px;background:#fde29d;"></div>
<div class="c " style="left:305.00px;top:866.00px;width:55.00px;height:41.00px;background:#fde29d;"><span class="s">۱۴</span></div>
<div class="c " style="left:220.00px;top:866.00px;width:85.00px;height:41.00px;background:#fde29d;"></div>
<div class="c " style="left:119.00px;top:866.00px;width:101.00px;height:41.00px;background:#fde29d;"><span class="s"><span class="n">(۳,۴۰۳)</span></span></div>
<div class="c r t1" style="left:35.00px;top:866.00px;width:84.00px;height:41.00px;background:#fde29d;"></div>
<div class="c r t1" style="left:1796.00px;top:907.00px;width:88.00px;height:24.00px;background:#efefef;">تخفیفات</div>
<div class="c r t1" style="left:1768.00px;top:907.00px;width:28.00px;height:24.00px;background:#efefef;"></div>
<div class="c " style="left:1717.00px;top:907.00px;width:51.00px;height:24.00px;background:#d3d3d3;"></div>
<div class="c " style="left:1663.00px;top:907.00px;width:54.00px;height:24.00px;background:#d3d3d3;"></div>
<div class="c " style="left:1577.00px;top:907.00px;width:86.00px;height:24.00px;background:#d3d3d3;"></div>
<div class="c " style="left:1474.00px;top:907.00px;width:103.00px;height:24.00px;background:#efefef;"><span class="s"><i class="z"></i></span></div>
<div class="c " style="left:1427.00px;top:907.00px;width:47.00px;height:24.00px;background:#d3d3d3;"></div>
<div class="c " style="left:1374.00px;top:907.00px;width:53.00px;height:24.00px;background:#d3d3d3;"></div>
<div class="c " style="left:1282.00px;top:907.00px;width:92.00px;height:24.00px;background:#efefef;"><span class="s"><i class="z"></i></span></div>
<div class="c " style="left:1232.00px;top:907.00px;width:50.00px;height:24.00px;background:#d3d3d3;"></div>
<div class="c " style="left:1177.00px;top:907.00px;width:55.00px;height:24.00px;background:#d3d3d3;"></div>
<div class="c " style="left:1091.00px;top:907.00px;width:86.00px;height:24.00px;background:#d3d3d3;"></div>
<div class="c " style="left:988.00px;top:907.00px;width:103.00px;height:24.00px;background:#efefef;"><span class="s"><i class="z"></i></span></div>
<div class="c " style="left:939.00px;top:907.00px;width:49.00px;height:24.00px;background:#d3d3d3;"></div>
<div class="c " style="left:886.00px;top:907.00px;width:53.00px;height:24.00px;background:#d3d3d3;"></div>
<div class="c " style="left:803.00px;top:907.00px;width:83.00px;height:24.00px;background:#d3d3d3;"></div>
<div class="c " style="left:703.00px;top:907.00px;width:100.00px;height:24.00px;background:#efefef;"><span class="s"><i class="z"></i></span></div>
<div class="c " style="left:651.00px;top:907.00px;width:52.00px;height:24.00px;background:#d3d3d3;"></div>
<div class="c " style="left:597.00px;top:907.00px;width:54.00px;height:24.00px;background:#d3d3d3;"></div>
<div class="c " style="left:511.00px;top:907.00px;width:86.00px;height:24.00px;background:#d3d3d3;"></div>
<div class="c " style="left:410.00px;top:907.00px;width:101.00px;height:24.00px;background:#efefef;"><span class="s"><i class="z"></i></span></div>
<div class="c " style="left:360.00px;top:907.00px;width:50.00px;height:24.00px;background:#d3d3d3;"></div>
<div class="c " style="left:305.00px;top:907.00px;width:55.00px;height:24.00px;background:#d3d3d3;"></div>
<div class="c " style="left:220.00px;top:907.00px;width:85.00px;height:24.00px;background:#d3d3d3;"></div>
<div class="c " style="left:119.00px;top:907.00px;width:101.00px;height:24.00px;background:#efefef;"><span class="s"><i class="z"></i></span></div>
<div class="c r t1" style="left:35.00px;top:907.00px;width:84.00px;height:24.00px;background:#efefef;"></div>
<div class="c r t1" style="left:1796.00px;top:931.00px;width:88.00px;height:24.00px;background:#fde29d;">جمع</div>
<div class="c r t1" style="left:1768.00px;top:931.00px;width:28.00px;height:24.00px;background:#fde29d;"></div>
<div class="c " style="left:1717.00px;top:931.00px;width:51.00px;height:24.00px;background:#fde29d;"></div>
<div class="c " style="left:1663.00px;top:931.00px;width:54.00px;height:24.00px;background:#fde29d;"></div>
<div class="c " style="left:1577.00px;top:931.00px;width:86.00px;height:24.00px;background:#fde29d;"></div>
<div class="c " style="left:1474.00px;top:931.00px;width:103.00px;height:24.00px;background:#fde29d;"><span class="s">۵,۳۵۹,۵۷۳</span></div>
<div class="c " style="left:1427.00px;top:931.00px;width:47.00px;height:24.00px;background:#fde29d;"></div>
<div class="c " style="left:1374.00px;top:931.00px;width:53.00px;height:24.00px;background:#fde29d;"></div>
<div class="c " style="left:1282.00px;top:931.00px;width:92.00px;height:24.00px;background:#fde29d;"><span class="s"><i class="z"></i></span></div>
<div class="c " style="left:1232.00px;top:931.00px;width:50.00px;height:24.00px;background:#fde29d;"></div>
<div class="c " style="left:1177.00px;top:931.00px;width:55.00px;height:24.00px;background:#fde29d;"></div>
<div class="c " style="left:1091.00px;top:931.00px;width:86.00px;height:24.00px;background:#fde29d;"></div>
<div class="c " style="left:988.00px;top:931.00px;width:103.00px;height:24.00px;background:#fde29d;"><span class="s">۵,۳۵۹,۵۷۳</span></div>
<div class="c " style="left:939.00px;top:931.00px;width:49.00px;height:24.00px;background:#fde29d;"></div>
<div class="c " style="left:886.00px;top:931.00px;width:53.00px;height:24.00px;background:#fde29d;"></div>
<div class="c " style="left:803.00px;top:931.00px;width:83.00px;height:24.00px;background:#fde29d;"></div>
<div class="c " style="left:703.00px;top:931.00px;width:100.00px;height:24.00px;background:#fde29d;"><span class="s">۱,۵۳۲,۴۰۱</span></div>
<div class="c " style="left:651.00px;top:931.00px;width:52.00px;height:24.00px;background:#fde29d;"></div>
<div class="c " style="left:597.00px;top:931.00px;width:54.00px;height:24.00px;background:#fde29d;"></div>
<div class="c " style="left:511.00px;top:931.00px;width:86.00px;height:24.00px;background:#fde29d;"></div>
<div class="c " style="left:410.00px;top:931.00px;width:101.00px;height:24.00px;background:#fde29d;"><span class="s">۶,۸۹۱,۹۷۴</span></div>
<div class="c " style="left:360.00px;top:931.00px;width:50.00px;height:24.00px;background:#fde29d;"></div>
<div class="c " style="left:305.00px;top:931.00px;width:55.00px;height:24.00px;background:#fde29d;"></div>
<div class="c " style="left:220.00px;top:931.00px;width:85.00px;height:24.00px;background:#fde29d;"></div>
<div class="c " style="left:119.00px;top:931.00px;width:101.00px;height:24.00px;background:#fde29d;"><span class="s">۴,۲۵۲,۸۲۱</span></div>
<div class="c r t1" style="left:35.00px;top:931.00px;width:84.00px;height:24.00px;background:#fde29d;"></div>
<div class="a" style="left:1884px;top:434px;width:1px;height:522px;background:#b6b6be"></div>
<div class="a" style="left:35px;top:955px;width:1850px;height:1px;background:#b6b6be"></div>
<div class="c r sb" style="left:1756.00px;top:1047.00px;width:128.00px;height:24.00px;background:#d3d3d3;">مواد اولیه داخلی</div>
<div class="c " style="left:1708.00px;top:1047.00px;width:48.00px;height:24.00px;background:#d3d3d3;"></div>
<div class="c " style="left:1623.00px;top:1047.00px;width:85.00px;height:24.00px;background:#d3d3d3;"></div>
<div class="c " style="left:1561.00px;top:1047.00px;width:62.00px;height:24.00px;background:#d3d3d3;"></div>
<div class="c " style="left:1452.00px;top:1047.00px;width:109.00px;height:24.00px;background:#d3d3d3;"></div>
<div class="c " style="left:1406.00px;top:1047.00px;width:46.00px;height:24.00px;background:#d3d3d3;"></div>
<div class="c " style="left:1336.00px;top:1047.00px;width:70.00px;height:24.00px;background:#d3d3d3;"></div>
<div class="c " style="left:1224.00px;top:1047.00px;width:112.00px;height:24.00px;background:#d3d3d3;"></div>
<div class="c " style="left:1127.00px;top:1047.00px;width:97.00px;height:24.00px;background:#d3d3d3;"></div>
<div class="c " style="left:1055.00px;top:1047.00px;width:72.00px;height:24.00px;background:#d3d3d3;"></div>
<div class="c " style="left:930.00px;top:1047.00px;width:125.00px;height:24.00px;background:#d3d3d3;"></div>
<div class="c " style="left:857.00px;top:1047.00px;width:73.00px;height:24.00px;background:#d3d3d3;"></div>
<div class="c " style="left:796.00px;top:1047.00px;width:61.00px;height:24.00px;background:#d3d3d3;"></div>
<div class="c " style="left:687.00px;top:1047.00px;width:109.00px;height:24.00px;background:#d3d3d3;"></div>
<div class="c " style="left:558.00px;top:1047.00px;width:129.00px;height:24.00px;background:#d3d3d3;"></div>
<div class="c " style="left:457.00px;top:1047.00px;width:101.00px;height:24.00px;background:#d3d3d3;"></div>
<div class="c " style="left:281.00px;top:1047.00px;width:176.00px;height:24.00px;background:#d3d3d3;"></div>
<div class="c " style="left:205.00px;top:1047.00px;width:76.00px;height:24.00px;background:#d3d3d3;"></div>
<div class="c " style="left:144.00px;top:1047.00px;width:61.00px;height:24.00px;background:#d3d3d3;"></div>
<div class="c " style="left:35.00px;top:1047.00px;width:109.00px;height:24.00px;background:#d3d3d3;"></div>
<div class="c r t1" style="left:1756.00px;top:1071.00px;width:128.00px;height:24.00px;background:#d3e4f5;padding-top:3px">رب گوجه فرنگی</div>
<div class="c r t1" style="left:1708.00px;top:1071.00px;width:48.00px;height:24.00px;background:#d3e4f5;padding-top:3px">کیلوگرم</div>
<div class="c " style="left:1623.00px;top:1071.00px;width:85.00px;height:24.00px;background:#d3e4f5;padding-top:3px"><span class="s">۲۲,۲۴۹,۸۸۴</span></div>
<div class="c " style="left:1561.00px;top:1071.00px;width:62.00px;height:24.00px;background:#fde29d;padding-top:3px"><span class="s">۲۲,۸۴۷</span></div>
<div class="c " style="left:1452.00px;top:1071.00px;width:109.00px;height:24.00px;background:#d3e4f5;padding-top:3px"><span class="s">۵۰۸,۲۴۹</span></div>
<div class="c " style="left:1406.00px;top:1071.00px;width:46.00px;height:24.00px;background:#d3e4f5;padding-top:3px"><span class="s">۱,۱۲۷</span></div>
<div class="c " style="left:1336.00px;top:1071.00px;width:70.00px;height:24.00px;background:#fde29d;padding-top:3px"><span class="s">۲۸,۵۰۲</span></div>
<div class="c " style="left:1224.00px;top:1071.00px;width:112.00px;height:24.00px;background:#d3e4f5;padding-top:3px"><span class="s">۳۲,۱۲۱</span></div>
<div class="c " style="left:1127.00px;top:1071.00px;width:97.00px;height:24.00px;background:#fde29d;padding-top:3px"><span class="s">۲۲,۳۷۶,۸۸۴</span></div>
<div class="c " style="left:1055.00px;top:1071.00px;width:72.00px;height:24.00px;background:#fde29d;padding-top:3px"><span class="s">۲۲,۸۷۳</span></div>
<div class="c " style="left:930.00px;top:1071.00px;width:125.00px;height:24.00px;background:#fde29d;padding-top:3px"><span class="s">۵۱۱,۸۷۷</span></div>
<div class="c " style="left:857.00px;top:1071.00px;width:73.00px;height:24.00px;background:#d3e4f5;padding-top:3px"><span class="s">۲,۶۳۸,۲۱۹</span></div>
<div class="c " style="left:796.00px;top:1071.00px;width:61.00px;height:24.00px;background:#fde29d;padding-top:3px"><span class="s">۲۷,۴۴۴</span></div>
<div class="c " style="left:687.00px;top:1071.00px;width:109.00px;height:24.00px;background:#d3e4f5;padding-top:3px"><span class="s">۷۲,۴۰۶</span></div>
<div class="c " style="left:558.00px;top:1071.00px;width:129.00px;height:24.00px;background:#fde29d;padding-top:3px"><span class="s">۲۵,۰۱۵,۱۰۳</span></div>
<div class="c " style="left:457.00px;top:1071.00px;width:101.00px;height:24.00px;background:#fde29d;padding-top:3px"><span class="s">۲۳,۳۵۷</span></div>
<div class="c " style="left:281.00px;top:1071.00px;width:176.00px;height:24.00px;background:#fde29d;padding-top:3px"><span class="s">۵۸۴,۲۸۳</span></div>
<div class="c " style="left:205.00px;top:1071.00px;width:76.00px;height:24.00px;background:#d3e4f5;padding-top:3px"><span class="s">۲۱,۸۴۳,۶۲۸</span></div>
<div class="c " style="left:144.00px;top:1071.00px;width:61.00px;height:24.00px;background:#fde29d;padding-top:3px"><span class="s">۲۱,۸۵۵</span></div>
<div class="c " style="left:35.00px;top:1071.00px;width:109.00px;height:24.00px;background:#d3e4f5;padding-top:3px"><span class="s">۴۷۷,۳۷۴</span></div>
<div class="a" style="left:1884px;top:1047px;width:1px;height:40px;background:#b6b6be"></div>
<div class="a" style="left:954px;top:542px;width:0;height:0"><div style="position:absolute;left:0;top:0;transform:translate(-50%,-50%) rotate(-45deg);font-family:'Liberation Sans',sans-serif;font-weight:bold;font-size:95px;line-height:95px;color:rgba(60,60,60,0.10);white-space:nowrap">@Codal360.ir</div></div>
<div class="a b" dir="rtl" style="left:35px;top:284px;width:1850px;height:27px;background:#0b97c9;color:#fff;font-size:11.5px;line-height:27px;padding-right:5px">تولید و فروش</div>
<div class="h " style="left:1768.00px;top:370.00px;width:116.00px;height:24.00px;">شرح</div>
<div class="h " style="left:1474.00px;top:370.00px;width:294.00px;height:24.00px;">از ابتدای سال مالی تا تاریخ ۱۴۰۴/۰۵/۳۱</div>
<div class="h " style="left:1282.00px;top:370.00px;width:192.00px;height:24.00px;">اصلاحات</div>
<div class="h " style="left:988.00px;top:370.00px;width:294.00px;height:24.00px;">از ابتدای سال مالی تا تاریخ ۱۴۰۴/۰۵/۳۱ (اصلاح شده)</div>
<div class="h " style="left:703.00px;top:370.00px;width:285.00px;height:24.00px;">دوره یک ماهه منتهی به ۱۴۰۴/۰۶/۳۱</div>
<div class="h " style="left:410.00px;top:370.00px;width:293.00px;height:24.00px;">از ابتدای سال مالی تا تاریخ ۱۴۰۴/۰۶/۳۱</div>
<div class="h " style="left:119.00px;top:370.00px;width:291.00px;height:24.00px;">از ابتدای سال مالی تا تاریخ ۱۴۰۳/۰۶/۳۱</div>
<div class="h " style="left:35.00px;top:370.00px;width:84.00px;height:64.00px;padding-top:2.5px">وضعیت<br>محصول-واحد</div>
<div class="h " style="left:1796.00px;top:394.00px;width:88.00px;height:40.00px;padding-top:2.5px">نام محصول</div>
<div class="h " style="left:1768.00px;top:394.00px;width:28.00px;height:40.00px;padding-top:2.5px">واحد</div>
<div class="h " style="left:1717.00px;top:394.00px;width:51.00px;height:40.00px;padding-top:2.5px">تعداد<br>تولید</div>
<div class="h " style="left:1663.00px;top:394.00px;width:54.00px;height:40.00px;padding-top:2.5px">تعداد<br>فروش</div>
<div class="h " style="left:1577.00px;top:394.00px;width:86.00px;height:40.00px;padding-top:2.5px">نرخ فروش<br>(ریال)</div>
<div class="h " style="left:1474.00px;top:394.00px;width:103.00px;height:40.00px;padding-top:2.5px">مبلغ فروش (میلیون<br>ریال)</div>
<div class="h " style="left:1427.00px;top:394.00px;width:47.00px;height:40.00px;padding-top:2.5px">تعداد<br>تولید</div>
<div class="h " style="left:1374.00px;top:394.00px;width:53.00px;height:40.00px;padding-top:2.5px">تعداد<br>فروش</div>
<div class="h " style="left:1282.00px;top:394.00px;width:92.00px;height:40.00px;padding-top:2.5px">مبلغ فروش<br>(میلیون ریال)</div>
<div class="h " style="left:1232.00px;top:394.00px;width:50.00px;height:40.00px;padding-top:2.5px">تعداد<br>تولید</div>
<div class="h " style="left:1177.00px;top:394.00px;width:55.00px;height:40.00px;padding-top:2.5px">تعداد<br>فروش</div>
<div class="h " style="left:1091.00px;top:394.00px;width:86.00px;height:40.00px;padding-top:2.5px">نرخ فروش<br>(ریال)</div>
<div class="h " style="left:988.00px;top:394.00px;width:103.00px;height:40.00px;padding-top:2.5px">مبلغ فروش (میلیون<br>ریال)</div>
<div class="h " style="left:939.00px;top:394.00px;width:49.00px;height:40.00px;padding-top:2.5px">تعداد<br>تولید</div>
<div class="h " style="left:886.00px;top:394.00px;width:53.00px;height:40.00px;padding-top:2.5px">تعداد<br>فروش</div>
<div class="h " style="left:803.00px;top:394.00px;width:83.00px;height:40.00px;padding-top:2.5px">نرخ فروش<br>(ریال)</div>
<div class="h " style="left:703.00px;top:394.00px;width:100.00px;height:40.00px;padding-top:2.5px">مبلغ فروش (میلیون<br>ریال)</div>
<div class="h " style="left:651.00px;top:394.00px;width:52.00px;height:40.00px;padding-top:2.5px">تعداد<br>تولید</div>
<div class="h " style="left:597.00px;top:394.00px;width:54.00px;height:40.00px;padding-top:2.5px">تعداد<br>فروش</div>
<div class="h " style="left:511.00px;top:394.00px;width:86.00px;height:40.00px;padding-top:2.5px">نرخ فروش<br>(ریال)</div>
<div class="h " style="left:410.00px;top:394.00px;width:101.00px;height:40.00px;padding-top:2.5px">مبلغ فروش (میلیون<br>ریال)</div>
<div class="h " style="left:360.00px;top:394.00px;width:50.00px;height:40.00px;padding-top:2.5px">تعداد<br>تولید</div>
<div class="h " style="left:305.00px;top:394.00px;width:55.00px;height:40.00px;padding-top:2.5px">تعداد<br>فروش</div>
<div class="h " style="left:220.00px;top:394.00px;width:85.00px;height:40.00px;padding-top:2.5px">نرخ فروش<br>(ریال)</div>
<div class="h " style="left:119.00px;top:394.00px;width:101.00px;height:40.00px;padding-top:2.5px">مبلغ فروش (میلیون<br>ریال)</div>
<div class="a" style="left:1884px;top:370px;width:1px;height:64px;background:#9fd3ea"></div>
<div class="a b" dir="rtl" style="left:35px;top:966px;width:1850px;height:28px;background:#0b97c9;color:#fff;font-size:11.5px;line-height:28px;padding-right:5px">خرید مواد اولیه</div>
<div class="h " style="left:1756.00px;top:999.00px;width:128.00px;height:48.00px;padding-top:4px">شرح</div>
<div class="h " style="left:1708.00px;top:999.00px;width:48.00px;height:48.00px;padding-top:4px">واحد</div>
<div class="h " style="left:1452.00px;top:999.00px;width:256.00px;height:24.00px;white-space:nowrap">از ابتدای سال مالی تا تاریخ ۱۴۰۴/۰۵/۳۱</div>
<div class="h " style="left:1224.00px;top:999.00px;width:228.00px;height:24.00px;white-space:nowrap">اصلاحات</div>
<div class="h " style="left:930.00px;top:999.00px;width:294.00px;height:24.00px;white-space:nowrap">ازابتدای سال مالی تا تاریخ ۱۴۰۴/۰۵/۳۱ (اصلاح شده)</div>
<div class="h " style="left:687.00px;top:999.00px;width:243.00px;height:24.00px;white-space:nowrap">خرید دوره یک ماهه منتهی به ۱۴۰۴/۰۶/۳۱</div>
<div class="h " style="left:281.00px;top:999.00px;width:406.00px;height:24.00px;white-space:nowrap">مواد اولیه خریداری شده از ابتدای دوره تا پایان دوره منتهی به ۱۴۰۴/۰۶/۳۱</div>
<div class="h " style="left:35.00px;top:999.00px;width:246.00px;height:24.00px;white-space:nowrap">از ابتدای سال مالی تا تاریخ ۱۴۰۳/۰۶/۳۱</div>
<div class="h " style="left:1623.00px;top:1023.00px;width:85.00px;height:24.00px;">مقدار</div>
<div class="h " style="left:1561.00px;top:1023.00px;width:62.00px;height:24.00px;white-space:nowrap">نرخ (ریال)</div>
<div class="h " style="left:1452.00px;top:1023.00px;width:109.00px;height:24.00px;white-space:nowrap">مبلغ (میلیون ریال)</div>
<div class="h " style="left:1406.00px;top:1023.00px;width:46.00px;height:24.00px;">مقدار</div>
<div class="h " style="left:1336.00px;top:1023.00px;width:70.00px;height:24.00px;white-space:nowrap">نرخ (ریال)</div>
<div class="h " style="left:1224.00px;top:1023.00px;width:112.00px;height:24.00px;white-space:nowrap">مبلغ ( میلیون ریال)</div>
<div class="h " style="left:1127.00px;top:1023.00px;width:97.00px;height:24.00px;">مقدار</div>
<div class="h " style="left:1055.00px;top:1023.00px;width:72.00px;height:24.00px;white-space:nowrap">نرخ (ریال)</div>
<div class="h " style="left:930.00px;top:1023.00px;width:125.00px;height:24.00px;white-space:nowrap">مبلغ (میلیون ریال)</div>
<div class="h " style="left:857.00px;top:1023.00px;width:73.00px;height:24.00px;">مقدار</div>
<div class="h " style="left:796.00px;top:1023.00px;width:61.00px;height:24.00px;white-space:nowrap">نرخ (ریال)</div>
<div class="h " style="left:687.00px;top:1023.00px;width:109.00px;height:24.00px;white-space:nowrap">مبلغ (میلیون ریال)</div>
<div class="h " style="left:558.00px;top:1023.00px;width:129.00px;height:24.00px;">مقدار</div>
<div class="h " style="left:457.00px;top:1023.00px;width:101.00px;height:24.00px;white-space:nowrap">نرخ (ریال)</div>
<div class="h " style="left:281.00px;top:1023.00px;width:176.00px;height:24.00px;white-space:nowrap">مبلغ (میلیون ریال)</div>
<div class="h " style="left:205.00px;top:1023.00px;width:76.00px;height:24.00px;">مقدار</div>
<div class="h " style="left:144.00px;top:1023.00px;width:61.00px;height:24.00px;white-space:nowrap">نرخ (ریال)</div>
<div class="h " style="left:35.00px;top:1023.00px;width:109.00px;height:24.00px;white-space:nowrap">مبلغ (میلیون ریال)</div>
<div class="a" style="left:1884px;top:999px;width:1px;height:48px;background:#9fd3ea"></div>
</body></html>
